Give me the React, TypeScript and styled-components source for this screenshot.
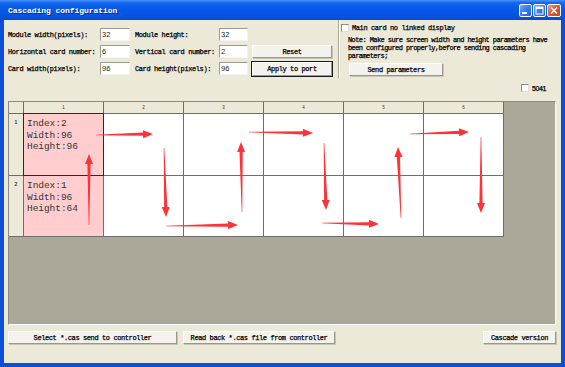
import React from 'react';
import styled, { createGlobalStyle } from 'styled-components';

const GlobalStyle = createGlobalStyle`
  html, body { margin: 0; padding: 0; background: #fff; }
  body { font-family: "Liberation Mono", monospace; }
  * { box-sizing: border-box; }
`;

const Window = styled.div`
  width: 565px;
  height: 367px;
  display: flex;
  flex-direction: column;
  background: #0B4FD6;
  overflow: hidden;
`;

const TitleBar = styled.div`
  height: 20px;
  flex-shrink: 0;
  display: flex;
  align-items: center;
  padding: 0 4px 0 8px;
  background: linear-gradient(to bottom, #4A95F8 0%, #1467EE 14%, #0559E6 45%, #0454E2 80%, #0A49CC 100%);
`;

const Title = styled.span`
  flex: 1;
  font: bold 8px "Liberation Mono", monospace;
  letter-spacing: -0.05px;
  color: #fff;
  text-shadow: 1px 1px 0 #0C2E8C;
`;

const Controls = styled.div`
  display: flex;
  gap: 1px;
  margin-top: 1px;
`;

const CtrlButton = styled.div<{ $close?: boolean }>`
  width: ${p => (p.$close ? 14 : 13)}px;
  height: 13px;
  border: 1px solid #fff;
  border-radius: 2px;
  display: flex;
  align-items: center;
  justify-content: center;
  background: ${p =>
    p.$close
      ? 'linear-gradient(135deg, #F09A7E 0%, #E15A35 45%, #C9401C 100%)'
      : 'linear-gradient(135deg, #7AAEFB 0%, #3B7EF2 45%, #2460E0 100%)'};
`;

const Client = styled.div`
  flex: 1;
  margin: 0 4px 4px 4px;
  background: #ECE9D8;
  padding: 0 5px 0 4px;
  display: flex;
  flex-direction: column;
`;

const TopSection = styled.div`
  height: 60px;
  display: flex;
  align-items: flex-start;
`;

const FormGrid = styled.div`
  margin-top: 8px;
  display: grid;
  grid-template-columns: 92px 35px 84px 33px 80px;
  grid-auto-rows: 13px;
  row-gap: 4px;
  align-items: center;
`;

const Label = styled.span<{ $sans?: boolean }>`
  font-family: ${p => (p.$sans ? '"Liberation Sans", sans-serif' : '"Liberation Mono", monospace')};
  font-size: 7px;
  letter-spacing: -0.4px;
  color: #000;
  -webkit-text-stroke: 0.25px #000;
  white-space: nowrap;
`;

const Field = styled.input<{ $w: number }>`
  width: ${p => p.$w}px;
  height: 13px;
  padding: 0 0 0 1px;
  background: #fff;
  border: 1px solid;
  border-color: #9D9B90 #F4F3EE #F4F3EE #9D9B90;
  font: 7.5px "Liberation Sans", sans-serif;
  color: #222;
  outline: none;
`;

const Button = styled.button<{ $w: number; $default?: boolean }>`
  width: ${p => p.$w}px;
  height: ${p => (p.$default ? 14 : 13)}px;
  padding: 0;
  background: #F3F2EC;
  border: 1px solid;
  border-color: #FFFFFF #9A9889 #9A9889 #FFFFFF;
  box-shadow: ${p => (p.$default ? '0 0 0 1px #1A1A1A' : '1px 1px 0 #C9C6B6')};
  font: 7px "Liberation Mono", monospace;
  letter-spacing: -0.4px;
  color: #000;
  -webkit-text-stroke: 0.25px #000;
  white-space: nowrap;
`;

const Separator = styled.div`
  width: 2px;
  height: 58px;
  margin-left: 6px;
  border-left: 1px solid #ACA899;
  border-right: 1px solid #FFFFFF;
`;

const RightPanel = styled.div`
  margin-left: 1px;
  padding-top: 4px;
  display: flex;
  flex-direction: column;
`;

const CheckRow = styled.div`
  display: flex;
  align-items: center;
  gap: 3px;
  height: 8px;
`;

const CheckBox = styled.span`
  width: 8px;
  height: 8px;
  background: #fff;
  border: 1px solid;
  border-color: #8E8C80 #E2E0D4 #E2E0D4 #8E8C80;
`;

const Note = styled.p`
  margin: 4px 0 0 7px;
  font-size: 7px;
  letter-spacing: -0.58px;
  line-height: 8px;
  color: #000;
  -webkit-text-stroke: 0.25px #000;
  width: 215px;
`;

const SendWrap = styled.div`
  display: flex;
  margin: 3px 0 0 8px;
`;

const OptionRow = styled(CheckRow)`
  margin: 4px 10px 0 auto;
`;

const GrayPanel = styled.div`
  margin-top: 9px;
  height: 224px;
  width: 548px;
  background: #ACA899;
  border-top: 1px solid #8C8A7C;
  border-left: 1px solid #8C8A7C;
  border-bottom: 1px solid #FFFFFF;
  border-right: 1px solid #FFFFFF;
`;

const GridWrap = styled.div`
  position: relative;
  width: 495px;
`;

const CardGrid = styled.div`
  display: grid;
  grid-template-columns: 14px repeat(6, 79px);
  grid-template-rows: 11px 61px 60px;
  gap: 1px;
  padding: 0 1px 1px 0;
  background: #6E6E6E;
`;

const HeadCell = styled.div`
  background: #ECE9D8;
  display: flex;
  justify-content: center;
  align-items: center;
  font: 4.5px "Liberation Sans", sans-serif;
  color: #333;
`;

const RowHead = styled.div`
  background: #ECE9D8;
  text-align: center;
  padding-top: 5px;
  font: bold 5px "Liberation Sans", sans-serif;
  color: #333;
`;

const Cell = styled.div<{ $card?: boolean; $selected?: boolean }>`
  background: ${p => (p.$card ? '#FFCDCD' : '#FFFFFF')};
  box-shadow: ${p => (p.$selected ? '0 0 0 1px #2A2A2A' : 'none')};
  position: relative;
  padding: 4px 0 0 3px;
  font-size: 9.5px;
  line-height: 11.5px;
  letter-spacing: -0.05px;
  color: #333;
  white-space: pre;
`;

const ArrowLayer = styled.svg`
  position: absolute;
  left: 0;
  top: 0;
  pointer-events: none;
`;

const BottomRow = styled.div`
  margin-top: 6px;
  display: flex;
  gap: 6px;
`;

const Spacer = styled.div`
  flex: 1;
`;

type Arrow = [number, number, number, number];

const arrows: Arrow[] = [
  [96, 135, 153, 134],
  [89, 225, 89, 154],
  [164, 148, 166, 217],
  [166, 226, 238, 225],
  [242, 212, 241, 142],
  [249, 132, 313, 133],
  [324, 143, 326, 210],
  [322, 223, 379, 224],
  [401, 218, 398, 147],
  [410, 134, 469, 132],
  [481, 137, 481, 213],
];

const arrowPoints = ([x1, y1, x2, y2]: Arrow) => {
  const dx = x2 - x1;
  const dy = y2 - y1;
  const len = Math.hypot(dx, dy);
  const ux = dx / len;
  const uy = dy / len;
  const nx = -uy;
  const ny = ux;
  const head = 10;
  const bx = x2 - ux * head;
  const by = y2 - uy * head;
  const pt = (x: number, y: number, w: number) => `${(x + nx * w).toFixed(1)},${(y + ny * w).toFixed(1)}`;
  return [
    pt(x1, y1, 0.3),
    pt(bx, by, 1.6),
    pt(bx, by, 4),
    pt(x2, y2, 0),
    pt(bx, by, -4),
    pt(bx, by, -1.6),
    pt(x1, y1, -0.3),
  ].join(' ');
};

const columns = [1, 2, 3, 4, 5, 6];

export default function App() {
  return (
    <>
      <GlobalStyle />
      <Window>
        <TitleBar>
          <Title>Cascading configuration</Title>
          <Controls>
            <CtrlButton>
              <svg width="11" height="11" viewBox="0 0 11 11">
                <rect x="2" y="7" width="5" height="2" fill="#fff" />
              </svg>
            </CtrlButton>
            <CtrlButton>
              <svg width="11" height="11" viewBox="0 0 11 11">
                <rect x="2" y="2" width="7" height="7" fill="none" stroke="#fff" strokeWidth="1" />
                <rect x="2" y="2" width="7" height="2" fill="#fff" />
              </svg>
            </CtrlButton>
            <CtrlButton $close>
              <svg width="12" height="11" viewBox="0 0 12 11">
                <path d="M3 2.5 L9 8.5 M9 2.5 L3 8.5" stroke="#fff" strokeWidth="1.6" />
              </svg>
            </CtrlButton>
          </Controls>
        </TitleBar>
        <Client>
          <TopSection>
            <FormGrid>
              <Label>Module width(pixels):</Label>
              <Field $w={30} defaultValue="32" />
              <Label>Module height:</Label>
              <Field $w={29} defaultValue="32" />
              <span />

              <Label>Horizontal card number:</Label>
              <Field $w={30} defaultValue="6" />
              <Label>Vertical card number:</Label>
              <Field $w={29} defaultValue="2" />
              <Button $w={80}>Reset</Button>

              <Label>Card width(pixels):</Label>
              <Field $w={30} defaultValue="96" />
              <Label>Card height(pixels):</Label>
              <Field $w={29} defaultValue="96" />
              <Button $w={80} $default>Apply to port</Button>
            </FormGrid>
            <Separator />
            <RightPanel>
              <CheckRow>
                <CheckBox />
                <Label>Main card no linked display</Label>
              </CheckRow>
              <Note>
                Note: Make sure screen width and height parameters have been configured properly,before sending cascading parameters;
              </Note>
              <SendWrap>
                <Button $w={94}>Send parameters</Button>
              </SendWrap>
            </RightPanel>
          </TopSection>

          <OptionRow>
            <CheckBox />
            <Label $sans>5041</Label>
          </OptionRow>

          <GrayPanel>
            <GridWrap>
              <CardGrid>
                <HeadCell />
                {columns.map(c => (
                  <HeadCell key={c}>{c}</HeadCell>
                ))}
                <RowHead>1</RowHead>
                <Cell $card $selected>{'Index:2\nWidth:96\nHeight:96'}</Cell>
                {columns.slice(1).map(c => (
                  <Cell key={c} />
                ))}
                <RowHead>2</RowHead>
                <Cell $card>{'Index:1\nWidth:96\nHeight:64'}</Cell>
                {columns.slice(1).map(c => (
                  <Cell key={c} />
                ))}
              </CardGrid>
              <ArrowLayer width="495" height="136" viewBox="9 102 495 136">
                {arrows.map((a, i) => (
                  <polygon key={i} points={arrowPoints(a)} fill="#FF3236" />
                ))}
              </ArrowLayer>
            </GridWrap>
          </GrayPanel>

          <BottomRow>
            <Button $w={169}>Select *.cas send to controller</Button>
            <Button $w={152}>Read back *.cas file from controller</Button>
            <Spacer />
            <Button $w={73}>Cascade version</Button>
          </BottomRow>
        </Client>
      </Window>
    </>
  );
}
